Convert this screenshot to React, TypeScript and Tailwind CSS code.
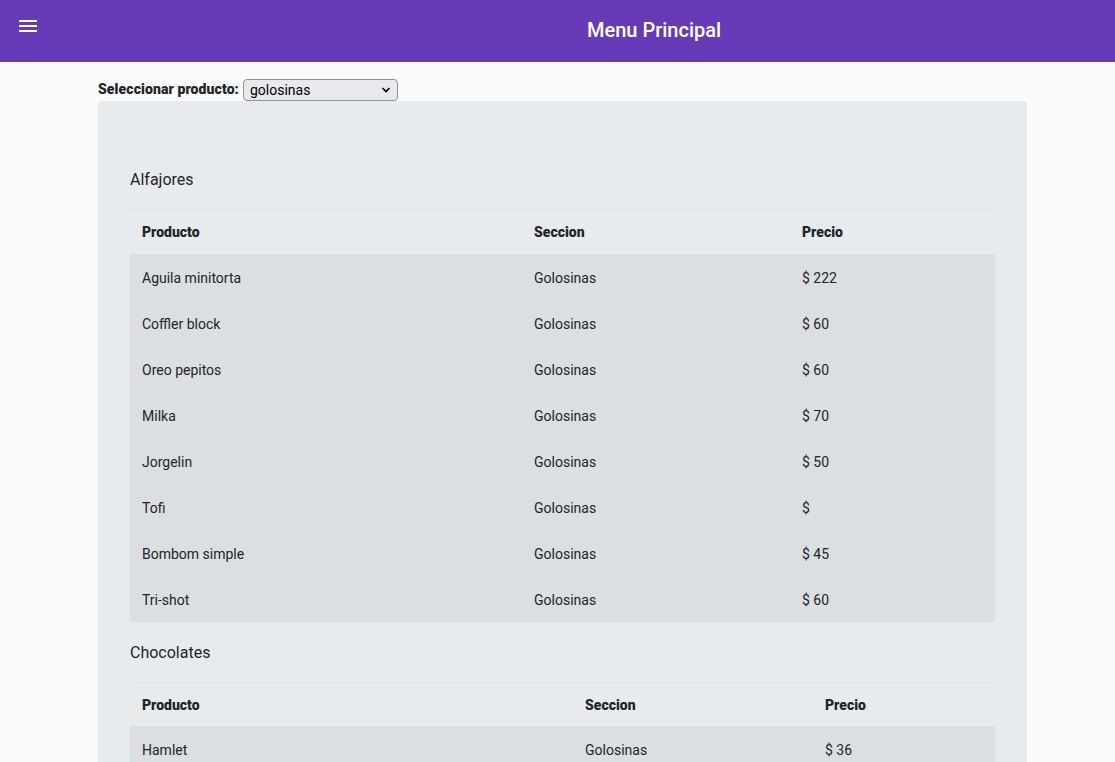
import React from "react";

type Row = { p: string; s: string; pr: string };

const alfajores: Row[] = [
  { p: "Aguila minitorta", s: "Golosinas", pr: "$ 222" },
  { p: "Coffler block", s: "Golosinas", pr: "$ 60" },
  { p: "Oreo pepitos", s: "Golosinas", pr: "$ 60" },
  { p: "Milka", s: "Golosinas", pr: "$ 70" },
  { p: "Jorgelin", s: "Golosinas", pr: "$ 50" },
  { p: "Tofi", s: "Golosinas", pr: "$" },
  { p: "Bombom simple", s: "Golosinas", pr: "$ 45" },
  { p: "Tri-shot", s: "Golosinas", pr: "$ 60" },
];

const chocolates: Row[] = [
  { p: "Hamlet", s: "Golosinas", pr: "$ 36" },
  { p: "Cofler", s: "Golosinas", pr: "$ 120" },
];

function Table({ rows, w1, w2 }: { rows: Row[]; w1: string; w2: string }) {
  return (
    <table className="w-full border-collapse text-[14px] text-[#212529]">
      <thead>
        <tr className="border-t border-[#dee2e6]">
          <th className={`${w1} h-[44px] px-3 pt-[2px] text-left font-black text-[#212529]`}>Producto</th>
          <th className={`${w2} h-[44px] px-3 pt-[2px] text-left font-black text-[#212529]`}>Seccion</th>
          <th className="h-[44px] px-3 pt-[2px] text-left font-black text-[#212529]">Precio</th>
        </tr>
      </thead>
      <tbody className="bg-[#dcdfe2]">
        {rows.map((r, i) => (
          <tr key={i}>
            <td className="h-[46px] px-3 pt-[3px]">{r.p}</td>
            <td className="h-[46px] px-3 pt-[3px]">{r.s}</td>
            <td className="h-[46px] px-3 pt-[3px]">{r.pr}</td>
          </tr>
        ))}
      </tbody>
    </table>
  );
}

export default function App() {
  return (
    <div className="min-h-screen bg-[#fafafa] font-['Roboto',sans-serif] text-[#212529]">
      <header className="flex h-[62px] items-start bg-[#673ab7] text-white">
        <svg className="ml-[16px] mt-[14px] shrink-0" width="24" height="24" viewBox="0 0 24 24" fill="white">
          <path d="M3 18h18v-2H3v2zm0-5h18v-2H3v2zm0-7v2h18V6H3z" />
        </svg>
        <h1 className="ml-[547px] mt-[20px] text-[20px] font-medium leading-[20px]">Menu Principal</h1>
      </header>
      <main className="ml-[98px] w-[929px]">
        <div className="mt-[17px] flex items-center gap-[4px]">
          <label className="mt-[-1px] text-[14px] font-black tracking-[0.1px] text-[#212529]">Seleccionar producto:</label>
          <div className="relative flex h-[22px] w-[155px] items-center rounded-[4px] border border-[#8f8f9d] bg-[#e9e9ed] pl-[6px] text-[14px] text-black">
            golosinas
            <svg className="absolute right-[6px] top-[6px]" width="10" height="8" viewBox="0 0 10 8" fill="none" stroke="black" strokeWidth="1.6">
              <path d="M1.5 2l3.5 3.5L8.5 2" />
            </svg>
          </div>
        </div>
        <div className="rounded-t-[4px] bg-[#e8ebee] px-[32px] pb-[20px] pt-[67px]">
          <h2 className="text-[16px] leading-[24px] text-[#212529]">Alfajores</h2>
          <div className="mt-[17px]">
            <Table rows={alfajores} w1="w-[392px]" w2="w-[268px]" />
          </div>
          <h2 className="mt-[19px] text-[16px] leading-[24px] text-[#212529]">Chocolates</h2>
          <div className="mt-[17px]">
            <Table rows={chocolates} w1="w-[443px]" w2="w-[240px]" />
          </div>
        </div>
      </main>
    </div>
  );
}
